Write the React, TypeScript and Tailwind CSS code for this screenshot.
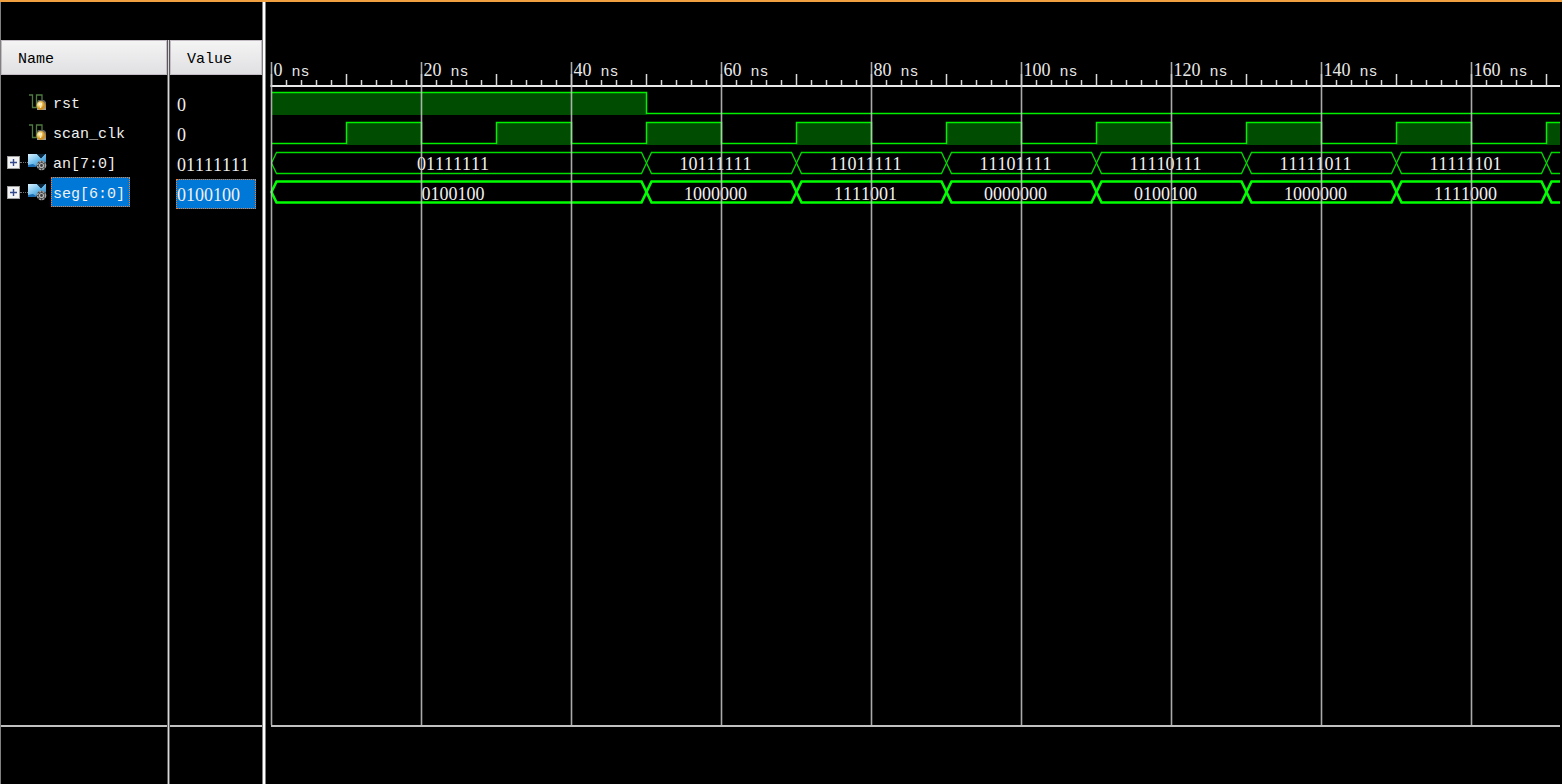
import React, { useState } from 'react';

interface Segment {
    start: number;
    end: number;
    value: string;
}

interface Signal {
    name: string;
    value: string;
    bus: boolean;
}

const SIGNALS: Signal[] = [
    { name: 'rst', value: '0', bus: false },
    { name: 'scan_clk', value: '0', bus: false },
    { name: 'an[7:0]', value: '01111111', bus: true },
    { name: 'seg[6:0]', value: '0100100', bus: true },
];

const TIMES = [0, 50, 70, 90, 110, 130, 150, 170, 190];
const AN_VALUES = ['01111111', '10111111', '11011111', '11101111', '11110111', '11111011', '11111101', ''];
const SEG_VALUES = ['0100100', '1000000', '1111001', '0000000', '0100100', '1000000', '1111000', ''];

const toSegments = (values: string[]): Segment[] =>
    values.map((value, i) => ({ start: TIMES[i], end: TIMES[i + 1], value }));

const ORIGIN = 5.5;
const PX_PER_NS = 7.5;
const END_NS = 190;
const LAST_LABEL_NS = 160;

const xAt = (ns: number) => ORIGIN + Math.round(ns * PX_PER_NS);
const range = (from: number, to: number, step: number) => {
    const out: number[] = [];
    for (let n = from; n < to; n += step) out.push(n);
    return out;
};

const WireIcon: React.FC = () => (
    <svg viewBox="0 0 19 18" className="h-[18px] w-[19px] shrink-0" aria-hidden="true">
        <defs>
            <radialGradient id="knob" cx="35%" cy="35%">
                <stop offset="0%" stopColor="#fffbe8" />
                <stop offset="50%" stopColor="#f0d070" />
                <stop offset="100%" stopColor="#d09020" />
            </radialGradient>
            <linearGradient id="plate" x1="0" y1="0" x2="0" y2="1">
                <stop offset="0%" stopColor="#5c5c58" />
                <stop offset="100%" stopColor="#a8a498" />
            </linearGradient>
        </defs>
        <path d="M1 2h3.500v12.500h4V2h5.500v6" fill="none" stroke="#4f7a42" strokeWidth="1.300" />
        <path d="M10 7h6l2 2v8H9V9z" fill="url(#plate)" />
        <circle cx="13" cy="12.500" r="4.400" fill="url(#knob)" />
        <path d="M13.500 10l-1 5" stroke="#fff8d8" strokeWidth="1" />
    </svg>
);

const BusIcon: React.FC = () => (
    <svg viewBox="0 0 19 18" className="h-[18px] w-[19px] shrink-0" aria-hidden="true">
        <defs>
            <linearGradient id="busFill" x1="0" y1="0" x2="1" y2="1">
                <stop offset="0%" stopColor="#dcf3ff" />
                <stop offset="50%" stopColor="#6cbcec" />
                <stop offset="100%" stopColor="#1f78bc" />
            </linearGradient>
        </defs>
        <path d="M0 1h9l4 4 4-4h1v9l-4-2-4 3-2 3-2-1H0z" fill="url(#busFill)" />
        <path d="M9 1l4 4.500L17 1z" fill="#0c2438" />
        <path d="M0 12l5-1 3 2-1 1H0z" fill="#1c6cae" />
        <circle cx="13.500" cy="12.500" r="4.800" fill="#3c3c3c" />
        <circle cx="13.500" cy="12.500" r="4" fill="none" stroke="#a8a8a8" strokeWidth="1.500" strokeDasharray="2.200 1" />
        <circle cx="13.500" cy="12.500" r="2" fill="none" stroke="#b8b8b8" strokeWidth="1.200" />
    </svg>
);

interface NameRowProps {
    signal: Signal;
    selected: boolean;
    onSelect: () => void;
}

const NameRow: React.FC<NameRowProps> = ({ signal, selected, onSelect }) => (
    <li className="flex h-[30px] items-center pl-[6px]">
        {signal.bus ? (
            <>
                <button
                    aria-label={`Expand ${signal.name}`}
                    className="flex h-[13px] w-[13px] shrink-0 items-center justify-center border border-[#a0a0a0] bg-[#f4f4f4]"
                >
                    <svg viewBox="0 0 9 9" className="h-[9px] w-[9px] shrink-0" aria-hidden="true">
                        <path d="M1 4.500h7M4.500 1v7" stroke="#35488c" strokeWidth="1.400" />
                    </svg>
                </button>
                <span className="w-2 border-t border-dotted border-[#777]" />
            </>
        ) : (
            <span className="w-[21px]" />
        )}
        {signal.bus ? <BusIcon /> : <WireIcon />}
        <button
            onClick={onSelect}
            className={`ml-1 flex h-[30px] items-center border border-dotted pl-px pr-1 pt-[6px] ${selected ? 'border-[#f08030] bg-[#0078d7]' : 'border-transparent'}`}
        >
            {signal.name}
        </button>
    </li>
);

const Ruler: React.FC = () => (
    <g>
        <line x1={ORIGIN - 1} x2="100%" y1="84" y2="84" stroke="#e8e8e8" strokeWidth="2" />
        {range(0, END_NS, 2).map(ns => (
            <line key={ns} x1={xAt(ns)} x2={xAt(ns)} y1={ns % 10 === 0 ? 72 : 78} y2="84" stroke="#d8d8d8" strokeWidth="1.500" />
        ))}
        {range(0, LAST_LABEL_NS + 1, 20).map(ns => (
            <text key={ns} x={xAt(ns) + 2} y="74" fill="#e8e8e8" className="whitespace-pre font-['Liberation_Mono',monospace] text-[15px]">
                <tspan className="font-['Liberation_Serif',serif] text-[18px] [font-kerning:none]">{ns}</tspan>
                {' ns'}
            </text>
        ))}
    </g>
);

// lo and hi are the y positions of the two levels
const LogicWave: React.FC<{ pulses: number[][]; hi: number; lo: number }> = ({ pulses, hi, lo }) => {
    let path = `M${ORIGIN} ${pulses[0][0] === 0 ? hi : lo}`;
    pulses.forEach(([from, to]) => {
        path += `H${xAt(from)}V${hi}H${xAt(to)}V${lo}`;
    });
    path += `H${xAt(END_NS)}`;
    return (
        <g>
            {pulses.map(([from, to]) => (
                <rect key={from} x={xAt(from)} y={hi} width={xAt(to) - xAt(from)} height={lo - hi + 1.5} fill="#004c00" />
            ))}
            <path d={path} fill="none" stroke="#00f000" strokeWidth="1.500" />
        </g>
    );
};

const BusWave: React.FC<{ segments: Segment[]; hi: number; lo: number; textY: number; thick?: boolean }> = ({ segments, hi, lo, textY, thick }) => {
    const mid = (hi + lo) / 2;
    return (
        <g>
            {segments.map(({ start, end, value }) => {
                const a = xAt(start);
                const b = xAt(end);
                return (
                    <g key={start}>
                        <path
                            d={`M${a} ${mid}L${a + 5} ${hi}H${b - 5}L${b} ${mid}L${b - 5} ${lo}H${a + 5}Z`}
                            fill="none"
                            stroke={thick ? '#00ff00' : '#00dc00'}
                            strokeWidth={thick ? 2.6 : 1.3}
                        />
                        {value && (
                            <text x={(a + b) / 2 - 6} y={textY} textAnchor="middle" fill="#f0f0f0" className="font-['Liberation_Serif',serif] text-[18px] [font-kerning:none]">
                                {value}
                            </text>
                        )}
                    </g>
                );
            })}
        </g>
    );
};

const Gridlines: React.FC = () => (
    <g>
        {range(0, END_NS, 20).map(ns => (
            <g key={ns} stroke="#c8c8c8">
                <line x1={xAt(ns)} x2={xAt(ns)} y1="60" y2="100%" strokeWidth="3" opacity="0.25" />
                <line x1={xAt(ns)} x2={xAt(ns)} y1="60" y2="100%" opacity="0.8" />
            </g>
        ))}
    </g>
);

const headerClass = "flex h-[35px] items-center border border-[#c4bcc4] bg-linear-to-b from-[#f4f4f4] to-[#e0e0e3] pt-1 text-[15px] text-black";

export default function App() {
    const [selected, setSelected] = useState('seg[6:0]');

    return (
        <main className="flex min-h-screen overflow-hidden border-t-2 border-[#f0a040] bg-black font-['Liberation_Mono',monospace] text-[15px] leading-5 text-[#f0f0f0]">
            <section className="flex w-[262px] shrink-0 flex-col border-l border-[#808080] pt-[38px]">
                <div className="flex flex-1">
                    <div className="flex flex-1 flex-col">
                        <div className={`${headerClass} pl-4`}>Name</div>
                        <ul className="flex-1 pt-3">
                            {SIGNALS.map(signal => (
                                <NameRow
                                    key={signal.name}
                                    signal={signal}
                                    selected={selected === signal.name}
                                    onSelect={() => setSelected(signal.name)}
                                />
                            ))}
                        </ul>
                        <div className="h-[59px] border-t-2 border-[#c0c0c0]" />
                    </div>
                    <div className="w-[3px] border-x border-[#5a5a5a] bg-[#d8d8d8]" />
                    <div className="flex w-[92px] flex-col">
                        <div className={`${headerClass} pl-4`}>Value</div>
                        <ul className="flex-1 pt-[14px] font-['Liberation_Serif',serif] text-[18px] [font-kerning:none]">
                            {SIGNALS.map(signal => (
                                <li
                                    key={signal.name}
                                    className={`mx-[6px] flex h-[30px] items-center border border-dotted pt-px ${selected === signal.name ? 'border-[#f08030] bg-[#0078d7]' : 'border-transparent'}`}
                                >
                                    {signal.value}
                                </li>
                            ))}
                        </ul>
                        <div className="h-[59px] border-t-2 border-[#c0c0c0]" />
                    </div>
                </div>
            </section>

            <div className="w-1 shrink-0 border-x border-[#808080] bg-white" />

            <section className="flex min-w-0 flex-1 flex-col pr-[2px]">
                <svg className="w-full flex-1" role="img" aria-label="Waveforms">
                    <Ruler />
                    <LogicWave pulses={[[0, 50]]} hi={90.5} lo={111.5} />
                    <LogicWave pulses={range(10, END_NS, 20).map(ns => [ns, ns + 10])} hi={120.5} lo={141.5} />
                    <BusWave segments={toSegments(AN_VALUES)} hi={150.5} lo={171.5} textY={168} />
                    <BusWave segments={toSegments(SEG_VALUES)} hi={179.5} lo={200.5} textY={198} thick />
                    <Gridlines />
                </svg>
                <div className="ml-[5px] h-[59px] border-t-2 border-[#c0c0c0]" />
            </section>
        </main>
    );
}
